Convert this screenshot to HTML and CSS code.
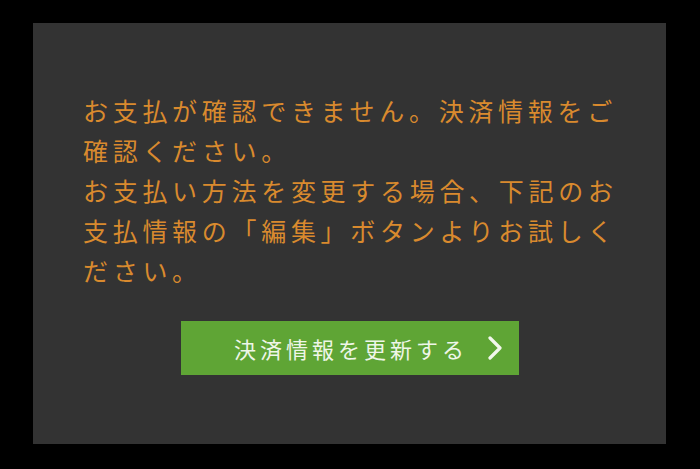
FILE: index.html
```html
<!DOCTYPE html>
<html lang="ja">
<head>
<meta charset="utf-8">
<link rel="stylesheet" href="styles.css">
</head>
<body>
<div class="panel">
  <p class="message">お支払が確認できません。決済情報をご確認ください。<br>お支払い方法を変更する場合、下記のお支払情報の「編集」ボタンよりお試しください。</p>
  <div class="actions">
    <a class="update-btn" href="#">
      <span class="label">決済情報を更新する</span>
      <svg class="chevron" width="16" height="24" viewBox="0 0 16 24"><path d="M3 2 L13 12 L3 22" fill="none" stroke="#f2f7ec" stroke-width="3.2" stroke-linecap="round" stroke-linejoin="round"/></svg>
    </a>
  </div>
</div>
</body>
</html>
```
FILE: styles.css
```css
html, body {
  margin: 0;
  padding: 0;
  background: #000;
}
body {
  width: 700px;
  height: 469px;
  overflow: hidden;
  font-family: "Noto Sans CJK JP", "Noto Sans", sans-serif;
}
.panel {
  box-sizing: border-box;
  margin: 23px 34px 0 33px;
  width: 633px;
  height: 421px;
  background: #333333;
  padding-top: 67px;
}
.message {
  margin: 0;
  padding: 0 40px 0 50px;
  color: #d98a2e;
  font-size: 25px;
  line-height: 40px;
  letter-spacing: 4.7px;
  font-weight: 400;
}
.actions {
  display: flex;
  justify-content: center;
  margin-top: 31px;
  margin-left: 1px;
}
.update-btn {
  box-sizing: border-box;
  width: 338px;
  height: 54px;
  background: #5fa535;
  display: flex;
  align-items: center;
  justify-content: flex-end;
  padding-right: 16px;
  text-decoration: none;
}
.label {
  color: #eef6e8;
  font-size: 22px;
  letter-spacing: 4px;
  margin-right: 19px;
}
.chevron {
  display: block;
}
```
